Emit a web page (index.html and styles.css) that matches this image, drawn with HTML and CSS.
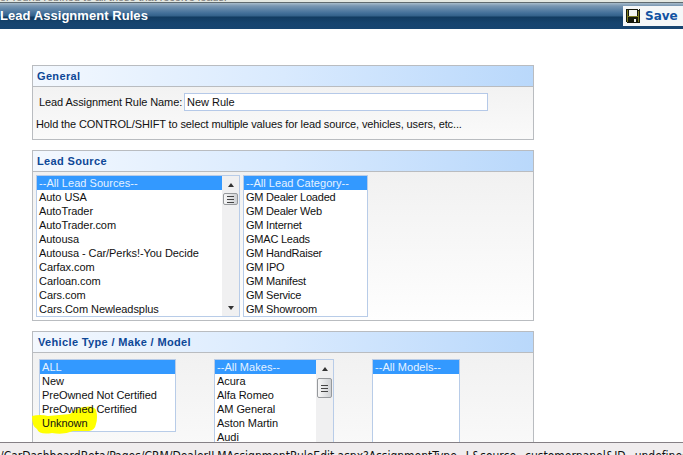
FILE: index.html
```html
<!DOCTYPE html>
<html lang="en">
<head>
<meta charset="utf-8">
<title>Lead Assignment Rules</title>
<link rel="stylesheet" href="styles.css">
</head>
<body>
<div class="page-edge"><span>or round robined to all those that receive leads.</span></div>
<header class="titlebar">
  <h1>Lead Assignment Rules</h1>
  <button class="save">
    <svg width="14" height="14" viewBox="0 0 14 14" shape-rendering="crispEdges"><path fill="#15180b" d="M0 0h14v14H1L0 13z"/><path fill="#7d7c20" d="M1 1h1v12H1zM12 2h1v11h-1zM2 7h10v1H2z"/><path fill="#f3f4f1" d="M3 1h8v6H3zM8 10h2v3H8z"/><path fill="#fff" d="M12 0h1v1h-1z"/></svg>
    <span>Save</span>
  </button>
</header>
<main>
  <section class="panel general">
    <h2>General</h2>
    <div class="body">
      <div class="name-row"><label for="rule">Lead Assignment Rule Name:</label><input id="rule" value="New Rule"></div>
      <p>Hold the CONTROL/SHIFT to select multiple values for lead source, vehicles, users, etc...</p>
    </div>
  </section>
  <section class="panel source">
    <h2>Lead Source</h2>
    <div class="body lists">
      <div class="list sources">
        <ul><li class="selected">--All Lead Sources--</li><li>Auto USA</li><li>AutoTrader</li><li>AutoTrader.com</li><li>Autousa</li><li>Autousa - Car/Perks!-You Decide</li><li>Carfax.com</li><li>Carloan.com</li><li>Cars.com</li><li>Cars.Com Newleadsplus</li></ul>
        <div class="scroll"><i class="up"></i><i class="thumb"></i><i class="down"></i></div>
      </div>
      <div class="list categories">
        <ul><li class="selected">--All Lead Category--</li><li>GM Dealer Loaded</li><li>GM Dealer Web</li><li>GM Internet</li><li>GMAC Leads</li><li>GM HandRaiser</li><li>GM IPO</li><li>GM Manifest</li><li>GM Service</li><li>GM Showroom</li></ul>
      </div>
    </div>
  </section>
  <section class="panel vehicle">
    <h2>Vehicle Type / Make / Model</h2>
    <div class="body lists">
      <div class="list types">
        <ul><li class="selected">ALL</li><li>New</li><li>PreOwned Not Certified</li><li>PreOwned Certified</li><li>Unknown</li></ul>
        <svg class="marker" width="68" height="30" viewBox="0 0 68 30"><path fill="#ffff00" d="M0 10Q8 8 16 10L38 8Q43 2 52 1Q61-1 64 4Q66 11 64 18Q63 24 57 25L41 25Q32 29 20 27Q7 29 5 23Q0 21 0 10Z"/></svg>
      </div>
      <div class="list makes">
        <ul><li class="selected">--All Makes--</li><li>Acura</li><li>Alfa Romeo</li><li>AM General</li><li>Aston Martin</li><li>Audi</li></ul>
        <div class="scroll"><i class="up"></i><i class="thumb"></i></div>
      </div>
      <div class="list models">
        <ul><li class="selected">--All Models--</li></ul>
      </div>
    </div>
  </section>
</main>
<footer class="status"><span>/CarDashboardBeta/Pages/CRM/DealerILMAssignmentRuleEdit.aspx?AssignmentType=L&amp;source=customerpanel&amp;ID=undefined</span></footer>
</body>
</html>
```
FILE: styles.css
```css
* { box-sizing: border-box; }
body {
  margin: 0;
  width: 683px;
  height: 455px;
  overflow: hidden;
  display: flex;
  flex-direction: column;
  background: #fff;
  color: #111;
  font: 11px/14px "Liberation Sans", Arial, sans-serif;
}
h1, h2, p, ul { margin: 0; padding: 0; }
.page-edge {
  flex: none;
  height: 3px;
  overflow: hidden;
  display: flex;
  align-items: flex-end;
  background: #e4e8e2;
  border-bottom: 1px solid #606b70;
  color: #777;
}
.page-edge span { line-height: 10px; white-space: nowrap; letter-spacing: -.05px; }
.titlebar {
  flex: none;
  height: 26px;
  display: flex;
  justify-content: space-between;
  align-items: flex-start;
  background: linear-gradient(#a8bccb 0, #7896b2 3px, #43709a 10px, #326089 13px, #113b61 14px, #17446f 20px, #174571 100%);
}
h1 {
  padding-top: 5px;
  color: #fff;
  font-size: 13px;
  line-height: 16px;
  letter-spacing: .05px;
}
.save {
  display: flex;
  align-items: center;
  gap: 5px;
  width: 60px;
  height: 20px;
  margin-top: 3px;
  padding: 0 0 0 3px;
  border: 0;
  background: #f5f7f8;
  color: #1252a2;
  font: bold 12px/16px "DejaVu Sans", sans-serif;
}
main {
  flex: 1;
  min-height: 0;
  overflow: hidden;
  display: flex;
  flex-direction: column;
  gap: 10px;
  padding: 36px 0 0 32px;
}
.panel {
  flex: none;
  width: 502px;
  border: 1px solid #b9bcc0;
  background: linear-gradient(#efefef, #fafafa);
}
.general { height: 75px; }
.source { height: 171px; }
.vehicle { height: 170px; }
.source, .vehicle { background: linear-gradient(#efefef, #fefefe); }
h2 {
  height: 21px;
  padding: 0 0 0 4px;
  border-bottom: 1px solid #b9bcc0;
  background: linear-gradient(90deg, #f3f8fe, #d9eafe 50%, #b9d8fb);
  color: #0d4796;
  font-size: 11px;
  line-height: 20px;
  letter-spacing: .35px;
}
.vehicle h2 { padding-left: 5px; }
.name-row { display: flex; align-items: center; padding: 6px 0 0 6px; }
.name-row label { width: 145px; white-space: nowrap; letter-spacing: -.09px; }
.name-row input {
  width: 304px;
  height: 18px;
  padding: 0 2px;
  border: 1px solid #b5c9e8;
  background: #fff;
  color: #111;
  font: inherit;
}
.general p { padding: 6px 0 0 3px; white-space: nowrap; letter-spacing: -.125px; }
.lists { display: flex; align-items: flex-start; }
.source .lists { padding: 3px 0 0 3px; gap: 3px; }
.vehicle .lists { padding: 6px 0 0 6px; }
.list {
  position: relative;
  display: flex;
  border: 1px solid #b8cce8;
  background: #fff;
}
.list ul { flex: 1; list-style: none; position: relative; z-index: 1; }
.list li { height: 14px; padding-left: 2px; white-space: nowrap; letter-spacing: -.06px; }
.list .selected { background: #3399ff; color: #e5f2ff; letter-spacing: .04px; }
.sources { width: 204px; height: 142px; }
.categories { width: 125px; height: 142px; }
.categories li { letter-spacing: -.22px; }
.types { width: 137px; height: 73px; }
.makes { width: 120px; height: 130px; margin-left: 38px; }
.models { width: 88px; height: 130px; margin-left: 38px; }
.marker { position: absolute; left: -8px; top: 46px; }
.scroll {
  width: 17px;
  display: flex;
  flex-direction: column;
  align-items: center;
  background: #f0f0f1;
}
.up { margin-top: 7px; border: 3px solid transparent; border-top: 0; border-bottom: 4px solid #333; }
.down { margin: auto 0 6px; border: 3px solid transparent; border-bottom: 0; border-top: 4px solid #333; }
.thumb {
  width: 15px;
  height: 12px;
  margin-top: 6px;
  border: 1px solid #96999c;
  border-radius: 2px;
  background:
    repeating-linear-gradient(#444 0 1px, transparent 1px 3px) center / 7px 7px no-repeat,
    linear-gradient(90deg, #f7f7f7, #cfd1d4);
}
.makes .thumb { height: 20px; margin-top: 7px; }
.status {
  flex: none;
  height: 13px;
  overflow: hidden;
  border-top: 1px solid #858085;
  background: #f0edee;
  font: 12px/16px "DejaVu Sans Condensed", "DejaVu Sans", sans-serif;
  white-space: nowrap;
}
.status span { display: block; padding-top: 5px; letter-spacing: -.01px; }
```
